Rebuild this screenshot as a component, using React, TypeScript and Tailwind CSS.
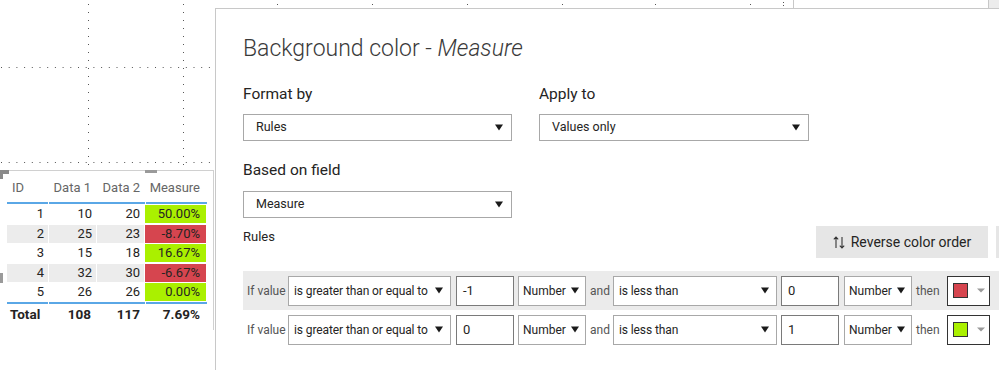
import React from "react";

const rows = [
  { id: 1, d1: 10, d2: 20, m: "50.00%", pos: true },
  { id: 2, d1: 25, d2: 23, m: "-8.70%", pos: false },
  { id: 3, d1: 15, d2: 18, m: "16.67%", pos: true },
  { id: 4, d1: 32, d2: 30, m: "-6.67%", pos: false },
  { id: 5, d1: 26, d2: 26, m: "0.00%", pos: true },
];

function Caret({ className = "" }: { className?: string }) {
  return (
    <svg width="8" height="7" viewBox="0 0 8 7" className={`shrink-0 ${className}`}>
      <path d="M0 0.5h8L4 6.5z" fill="#1a1a1a" />
    </svg>
  );
}

function Select({
  value,
  className,
  textClass = "text-[12.5px]",
}: {
  value: string;
  className: string;
  textClass?: string;
}) {
  return (
    <div
      className={`flex shrink-0 items-center justify-between border border-[#a8a8a8] bg-white text-[#252423] ${className}`}
    >
      <span className={`whitespace-nowrap ${textClass}`}>{value}</span>
      <Caret />
    </div>
  );
}

function NumInput({ value }: { value: string }) {
  return (
    <div className="flex h-[30px] w-[58px] shrink-0 items-center border border-[#7a7a7a] bg-white pl-[6px] text-[13px] text-[#252423]">
      {value}
    </div>
  );
}

function RuleRow({
  from,
  to,
  color,
  shaded,
}: {
  from: string;
  to: string;
  color: string;
  shaded?: boolean;
}) {
  return (
    <div
      className={`flex h-[39px] w-[760px] items-center whitespace-nowrap ${shaded ? "bg-[#ebebeb]" : "bg-white"}`}
    >
      <span className="w-[45px] shrink-0 pl-[4px] text-[12px] text-[#555]">If value</span>
      <Select
        value="is greater than or equal to"
        className="h-[30px] w-[163px] pl-[5px] pr-[7px]"
        textClass="text-[12px] tracking-[-0.1px]"
      />
      <div className="w-[5px] shrink-0" />
      <NumInput value={from} />
      <div className="w-[4px] shrink-0" />
      <Select value="Number" className="h-[30px] w-[68px] pl-[4px] pr-[6px]" textClass="text-[12px]" />
      <span className="w-[27px] shrink-0 pl-[4px] text-[12px] text-[#555]">and</span>
      <Select
        value="is less than"
        className="h-[30px] w-[164px] pl-[5px] pr-[7px]"
        textClass="text-[12px] tracking-[-0.1px]"
      />
      <div className="w-[4px] shrink-0" />
      <NumInput value={to} />
      <div className="w-[5px] shrink-0" />
      <Select value="Number" className="h-[30px] w-[68px] pl-[4px] pr-[6px]" textClass="text-[12px]" />
      <span className="w-[35px] shrink-0 pl-[4px] text-[12px] text-[#555]">then</span>
      <div className="flex h-[30px] w-[43px] shrink-0 items-center border border-[#333] bg-white pl-[5px]">
        <div className="h-[15px] w-[15px] border border-[#333]" style={{ backgroundColor: color }} />
        <svg width="8" height="5" viewBox="0 0 8 5" className="ml-[9px]">
          <path d="M0 0.5h8L4 4.5z" fill="#9a9a9a" />
        </svg>
      </div>
    </div>
  );
}

function CanvasGrid() {
  const xs = [88.5, 183.5, 277.5, 372.5, 467.5, 562.5, 655.5, 750.5];
  return (
    <svg width="800" height="175" className="pointer-events-none absolute left-0 top-0">
      {xs.map((x) => (
        <line key={x} x1={x} y1={4} x2={x} y2={170} stroke="#555" strokeWidth="1" strokeDasharray="1 7" />
      ))}
      <line x1={783.5} y1={2} x2={783.5} y2={8} stroke="#555" strokeDasharray="1 2" />
      <line x1={1} y1={67.5} x2={215} y2={67.5} stroke="#555" strokeDasharray="1 6.7" />
      <line x1={1} y1={162.5} x2={215} y2={162.5} stroke="#555" strokeDasharray="1 6.7" />
    </svg>
  );
}

function TableVisual() {
  return (
    <div className="relative mt-[170px] h-[160px] w-[214px] border-r border-t border-[#d0d0d0] bg-white">
      <div className="absolute -top-px left-0 h-[4px] w-[9px] bg-[#8a8a8a]" />
      <div className="absolute -top-px left-0 h-[9px] w-[3px] bg-[#8a8a8a]" />
      <div className="absolute -top-px left-[145px] h-[3px] w-[12px] bg-[#9a9a9a]" />
      <div className="absolute left-0 top-[102px] h-[10px] w-[3px] bg-[#9a9a9a]" />

      <div className="pl-[7px] pt-[4px] text-[13px] text-[#252423]">
        <div className="flex h-[25px] items-center text-[#666]">
          <div className="w-[41px] pl-[5px]">ID</div>
          <div className="w-[48px] pr-[5px] text-right">Data 1</div>
          <div className="w-[49px] pr-[5px] text-right">Data 2</div>
          <div className="w-[61px] pr-[6px] text-right">Measure</div>
        </div>
        <div className="mt-[2px] flex gap-px">
          <div className="h-[2px] w-[41px] bg-[#5aa7e6]" />
          <div className="h-[2px] w-[96px] bg-[#5aa7e6]" />
          <div className="h-[2px] w-[61px] bg-[#5aa7e6]" />
        </div>
        {rows.map((r) => (
          <div key={r.id} className="flex h-[19.5px] items-start gap-px pt-px">
            <div className={`flex h-[18px] w-[41px] items-center justify-end pr-[4px] ${r.id % 2 === 0 ? "bg-[#ececec]" : ""}`}>
              {r.id}
            </div>
            <div className={`flex h-[18px] w-[47px] items-center justify-end pr-[4px] ${r.id % 2 === 0 ? "bg-[#ececec]" : ""}`}>
              {r.d1}
            </div>
            <div className={`flex h-[18px] w-[47px] items-center justify-end pr-[4px] ${r.id % 2 === 0 ? "bg-[#ececec]" : ""}`}>
              {r.d2}
            </div>
            <div
              className={`flex h-[18px] w-[61px] items-center justify-end pr-[6px] ${r.pos ? "bg-[#aaf000]" : "bg-[#d6454f]"}`}
            >
              {r.m}
            </div>
          </div>
        ))}
        <div className="flex gap-px">
          <div className="h-[2px] w-[41px] bg-[#5aa7e6]" />
          <div className="h-[2px] w-[96px] bg-[#5aa7e6]" />
          <div className="h-[2px] w-[61px] bg-[#5aa7e6]" />
        </div>
        <div className="flex h-[22px] items-center text-[13.5px] font-bold">
          <div className="w-[41px] pl-[3px]">Total</div>
          <div className="w-[48px] pr-[5px] text-right">108</div>
          <div className="w-[49px] pr-[5px] text-right">117</div>
          <div className="w-[61px] pr-[6px] text-right">7.69%</div>
        </div>
      </div>
    </div>
  );
}

export default function App() {
  return (
    <div className="relative flex h-[370px] w-[999px] overflow-hidden bg-white font-['Roboto',sans-serif] text-[#252423]">
      <CanvasGrid />

      <div className="relative w-[215px] shrink-0">
        <TableVisual />
      </div>

      <div className="relative flex min-w-0 flex-1 flex-col">
        <div className="relative h-[8px] shrink-0">
          <div className="absolute left-[578px] top-0 h-[8px] w-[196px] border-l border-r border-[#c8c8c8] bg-white" />
          <div className="absolute left-[774px] top-0 h-[8px] w-[20px] bg-[#ececec]" />
        </div>

        <div className="relative z-10 flex-1 border-l border-t border-[#c8c8c8] bg-white pl-[27px]">
          <h1 className="mt-[25px] h-[30px] whitespace-nowrap text-[23px] font-light leading-[30px] text-[#3a3a3a]">
            Background color - <span className="italic">Measure</span>
          </h1>

          <div className="mt-[20px] flex gap-[27px]">
            <div className="w-[269px]">
              <p className="h-[20px] text-[15.5px] leading-[20px]">Format by</p>
              <Select value="Rules" className="mt-[10px] h-[27px] w-[269px] pl-[12px] pr-[8px]" />
            </div>
            <div className="w-[270px]">
              <p className="h-[20px] text-[15.5px] leading-[20px]">Apply to</p>
              <Select value="Values only" className="mt-[10px] h-[27px] w-[270px] pl-[12px] pr-[8px]" />
            </div>
          </div>

          <p className="mt-[19px] h-[20px] text-[15.5px] leading-[20px]">Based on field</p>
          <Select value="Measure" className="mt-[11px] h-[27px] w-[269px] pl-[12px] pr-[8px]" />

          <div className="mt-[8px] flex w-[760px] items-start">
            <p className="mt-[3px] w-[573px] shrink-0 text-[13px] leading-[16px]">Rules</p>
            <button className="flex h-[32px] w-[172px] shrink-0 items-center justify-center gap-[6px] whitespace-nowrap bg-[#e6e6e6] text-[14px] text-[#252423]">
              <svg width="12" height="13" viewBox="0 0 12 13">
                <path d="M3 12V1M0.8 3.4L3 1l2.2 2.4M9 1v11M6.8 9.6L9 12l2.2-2.4" fill="none" stroke="#333" strokeWidth="1.1" />
              </svg>
              Reverse color order
            </button>
            <div className="ml-[8px] h-[32px] w-[20px] shrink-0 bg-[#e6e6e6]" />
          </div>

          <div className="mt-[13px]">
            <RuleRow from="-1" to="0" color="#d6454f" shaded />
            <RuleRow from="0" to="1" color="#aaf000" />
          </div>
        </div>
      </div>
    </div>
  );
}
